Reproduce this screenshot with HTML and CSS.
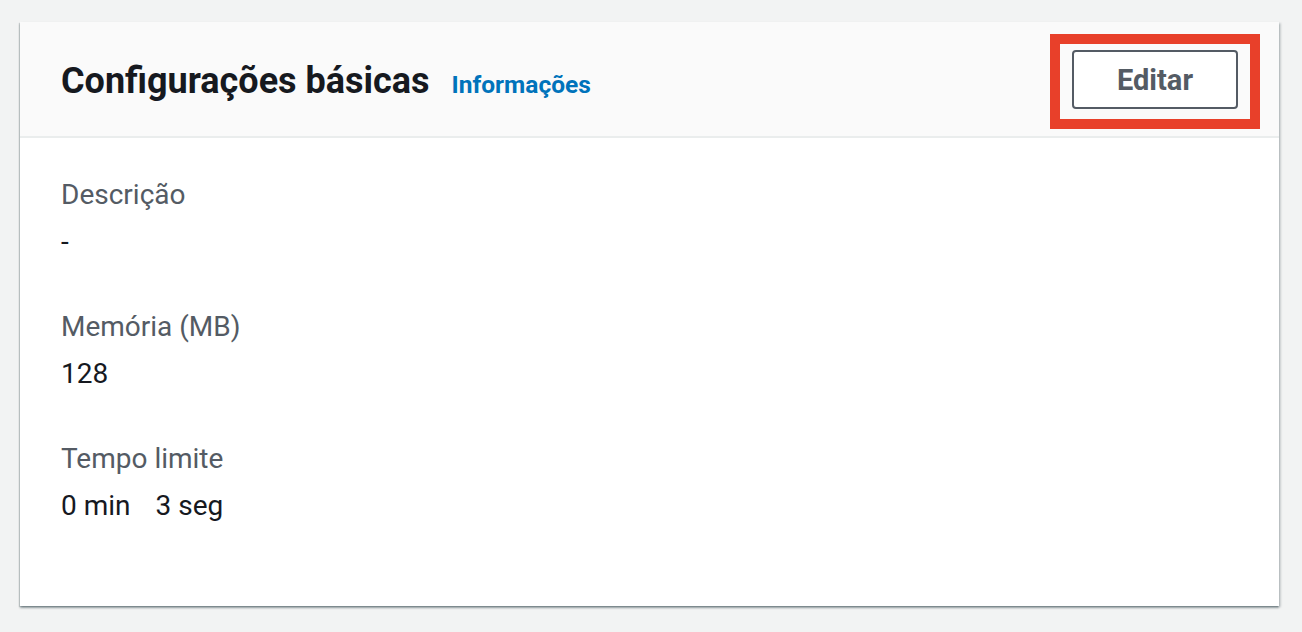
FILE: index.html
```html
<!DOCTYPE html>
<html lang="pt-BR">
<head>
<meta charset="utf-8">
<title>Configurações básicas</title>
<link rel="stylesheet" href="styles.css">
</head>
<body>
<div class="page">
  <section class="card">
    <header class="card-header">
      <div class="title-group">
        <h2 class="title">Configurações básicas</h2>
        <a class="info-link" href="#">Informações</a>
      </div>
      <div class="highlight">
        <button class="btn" type="button">Editar</button>
      </div>
    </header>
    <div class="card-body">
      <div class="field">
        <div class="label">Descrição</div>
        <div class="value">-</div>
      </div>
      <div class="field">
        <div class="label">Memória (MB)</div>
        <div class="value">128</div>
      </div>
      <div class="field">
        <div class="label">Tempo limite</div>
        <div class="value"><span class="part">0 min</span><span class="part">3 seg</span></div>
      </div>
    </div>
  </section>
</div>
</body>
</html>
```

FILE: styles.css
```css
html, body {
  margin: 0;
  padding: 0;
  background: #f2f3f3;
  font-family: Roboto, "Liberation Sans", sans-serif;
}

.page {
  padding: 22px 23px 26px 20px;
}

.card {
  background: #ffffff;
  height: 584px;
  box-shadow: 0 2px 2px 0 rgba(0, 28, 36, 0.35), 2px 1px 2px 0 rgba(0, 28, 36, 0.15), -1px 1px 1px 0 rgba(0, 28, 36, 0.15);
}

.card-header {
  display: flex;
  align-items: center;
  justify-content: space-between;
  height: 114px;
  padding: 0 41px;
  background: #fafafa;
  border-bottom: 2px solid #eaeded;
}

.title-group {
  display: flex;
  align-items: baseline;
  gap: 22px;
  padding-top: 4px;
}

.title {
  margin: 0;
  font-size: 36px;
  font-weight: 700;
  color: #16191f;
}

.info-link {
  font-size: 24.5px;
  font-weight: 700;
  color: #0073bb;
  text-decoration: none;
}

.highlight {
  border: 10px solid #e8402a;
  padding: 6px 12px 10px 12px;
  margin: -16px -22px -20px -22px;
  display: flex;
}

.btn {
  width: 166px;
  height: 59px;
  background: #ffffff;
  border: 2px solid #545b64;
  border-radius: 4px;
  color: #545b64;
  font-family: Roboto, "Liberation Sans", sans-serif;
  font-size: 29px;
  font-weight: 700;
  padding: 2px 0 0 0;
}

.card-body {
  padding: 33px 41px 0 41px;
  display: flex;
  flex-direction: column;
  gap: 37px;
}

.label {
  font-size: 28px;
  line-height: 47px;
  color: #545b64;
}

.value {
  font-size: 28px;
  line-height: 48px;
  color: #16191f;
  display: flex;
  gap: 25px;
}
```
